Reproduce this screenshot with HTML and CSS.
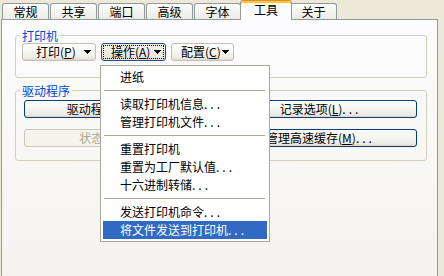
FILE: index.html
```html
<!DOCTYPE html>
<html lang="zh-CN">
<head>
<meta charset="utf-8">
<title>工具</title>
<link rel="stylesheet" href="styles.css">
</head>
<body>
<div class="window">
  <div class="tabs">
    <div class="tab">常规</div>
    <div class="tab">共享</div>
    <div class="tab">端口</div>
    <div class="tab">高级</div>
    <div class="tab">字体</div>
    <div class="tab active">工具</div>
    <div class="tab">关于</div>
  </div>
  <div class="panel">
    <fieldset class="group group-printer">
      <legend>打印机</legend>
      <div class="btn-row">
        <button class="btn soft split print-btn">打印(<u>P</u>)<svg class="arrow" width="7" height="4" viewBox="0 0 7 4"><path d="M0 0h7v1h-1v1h-1v1h-1v1h-1v-1h-1v-1h-1v-1h-1z"/></svg></button>
        <button class="btn pressed split op-btn"><span class="focus">操作(<u>A</u>)<svg class="arrow" width="7" height="4" viewBox="0 0 7 4"><path d="M0 0h7v1h-1v1h-1v1h-1v1h-1v-1h-1v-1h-1v-1h-1z"/></svg></span></button>
        <button class="btn soft split cfg-btn">配置(<u>C</u>)<svg class="arrow" width="7" height="4" viewBox="0 0 7 4"><path d="M0 0h7v1h-1v1h-1v1h-1v1h-1v-1h-1v-1h-1v-1h-1z"/></svg></button>
      </div>
    </fieldset>
    <fieldset class="group group-driver">
      <legend>驱动程序</legend>
      <div class="btn-grid">
        <button class="btn std">驱动程序设置(<u>D</u>)<span class="dots">...</span></button>
        <button class="btn std">记录选项(<u>L</u>)<span class="dots">...</span></button>
        <button class="btn std" disabled>状态信息(<u>T</u>)<span class="dots">...</span></button>
        <button class="btn std">管理高速缓存(<u>M</u>)<span class="dots">...</span></button>
      </div>
    </fieldset>
  </div>
  <div class="menu">
    <div class="item">进纸</div>
    <div class="sep"></div>
    <div class="item">读取打印机信息<span class="dots">...</span></div>
    <div class="item">管理打印机文件<span class="dots">...</span></div>
    <div class="sep"></div>
    <div class="item">重置打印机</div>
    <div class="item">重置为工厂默认值<span class="dots">...</span></div>
    <div class="item">十六进制转储<span class="dots">...</span></div>
    <div class="sep"></div>
    <div class="item">发送打印机命令<span class="dots">...</span></div>
    <div class="item hl">将文件发送到打印机<span class="dots">...</span></div>
  </div>
</div>
</body>
</html>
```

FILE: styles.css
```css
* { box-sizing: border-box; }
html, body { margin: 0; padding: 0; }
body {
  background: #ECE9D8;
  font-family: "Noto Sans CJK SC", "Noto Sans", sans-serif;
  font-size: 12px;
  color: #000;
}
.window {
  position: relative;
  width: 444px;
  height: 276px;
  overflow: hidden;
}
.tabs {
  position: relative;
  z-index: 2;
  display: flex;
  align-items: flex-end;
  height: 19px;
  padding-left: 2px;
}
.tab {
  width: 47px;
  height: 16px;
  margin-right: 1px;
  border: 1px solid #919B9C;
  border-bottom: 0;
  border-radius: 3px 3px 0 0;
  background: linear-gradient(#FFFFFF, #F4F3EF 55%, #ECEBE6);
  text-align: center;
  line-height: 15px;
}
.tab.active {
  position: relative;
  width: 52px;
  height: 20px;
  margin: 0 -2px -1px -2px;
  border-top: 1px solid #E68B2C;
  box-shadow: inset 0 2px 0 #FFC73C;
  background: #FCFCFE;
  line-height: 17px;
}
.panel {
  margin-left: 1px;
  width: 437px;
  height: 262px;
  border: 1px solid #919B9C;
  background: linear-gradient(#FCFCFE, #F4F3EE);
  padding: 8px 10px 0 13px;
}
.group {
  margin: 0;
  border: 1px solid #D0D0BF;
  border-radius: 3px;
  min-width: 0;
}
.group legend {
  padding: 0 2px;
  line-height: 15px;
  color: #0046D5;
}
.group-printer {
  padding: 0 8px 16px 6px;
}
.group-printer legend { margin-left: -2px; }
.group-driver {
  margin-top: 5px;
  padding: 2px 9px 13px 8px;
}
.group-driver legend { margin-left: -4px; }
.btn-row {
  display: flex;
  gap: 5px;
}
.btn {
  font: inherit;
  color: #000;
  height: 18px;
  margin: 0;
  padding: 0;
  border-radius: 3px;
  line-height: 16px;
  white-space: nowrap;
}
.btn u { text-decoration: underline; text-underline-offset: 1px; }
.split {
  display: flex;
  align-items: center;
  padding: 0 4px 0 9px;
}
.split .arrow { margin-left: auto; flex: none; shape-rendering: crispEdges; }
.print-btn { width: 74px; padding-left: 13px; }
.op-btn { width: 65px; padding: 0 1px; }
.cfg-btn { width: 63px; }
.soft {
  border: 1px solid #C4C1B4;
  background: linear-gradient(#FFFFFF, #F6F6F2 50%, #EDECE6 85%, #DCD8CC);
}
.pressed {
  border: 1px solid #2C4E7E;
  background: linear-gradient(#F2F1EC, #EAE9E3 70%, #E2E0D8);
}
.focus {
  display: flex;
  align-items: center;
  width: 100%;
  height: 14px;
  border: 1px dotted #000;
  padding: 0 2px 0 7px;
}
.btn-grid {
  display: grid;
  grid-template-columns: 1fr 1fr;
  column-gap: 7px;
  row-gap: 11px;
}
.std {
  border: 1px solid #003C74;
  background: linear-gradient(#FFFFFF, #F5F5F1 45%, #ECEBE5 85%, #D8D3C7);
  text-align: center;
}
.std:disabled {
  border-color: #C9C7BA;
  background: #F5F4EA;
  color: #ACA899;
}
.dots { letter-spacing: 3px; }
.menu {
  position: absolute;
  left: 100px;
  top: 65px;
  width: 170px;
  border: 1px solid #ACA899;
  background: #FFFFFF;
  padding: 2px;
  z-index: 5;
}
.item {
  height: 18px;
  line-height: 18px;
  padding-left: 17px;
  white-space: nowrap;
}
.item.hl {
  background: #316AC5;
  color: #FFFFFF;
}
.sep {
  height: 9px;
  display: flex;
  align-items: center;
}
.sep::before {
  content: "";
  flex: 1;
  height: 1px;
  margin: 0 2px 0 1px;
  background: #ACA899;
}
```
